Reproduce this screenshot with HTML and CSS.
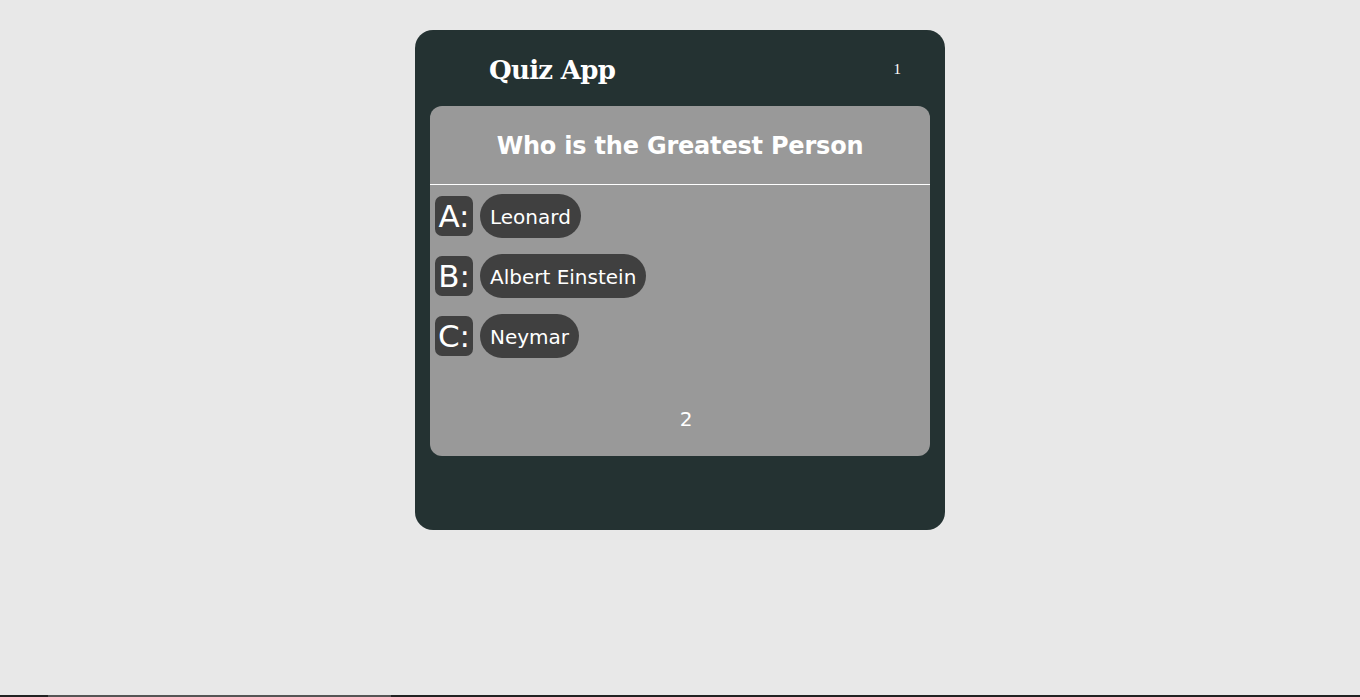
FILE: index.html
```html
<!DOCTYPE html>
<html>
<head>
<meta charset="utf-8">
<link rel="stylesheet" href="styles.css">
</head>
<body>
<div class="app">
  <header class="top">
    <h1 class="title">Quiz App</h1>
    <span class="count">1</span>
  </header>
  <section class="card">
    <h2 class="question">Who is the Greatest Person</h2>
    <div class="options">
      <div class="row"><span class="label">A:</span><button class="opt">Leonard</button></div>
      <div class="row"><span class="label">B:</span><button class="opt">Albert Einstein</button></div>
      <div class="row"><span class="label">C:</span><button class="opt">Neymar</button></div>
    </div>
    <div class="num">2</div>
  </section>
</div>
<div class="scrollbar"><div class="thumb"></div></div>
</body>
</html>
```

FILE: styles.css
```css
html, body {
  margin: 0;
  padding: 0;
  background: #e8e8e8;
  height: 100%;
}
body {
  padding-top: 30px;
  box-sizing: border-box;
  overflow: hidden;
}
.app {
  width: 530px;
  height: 500px;
  margin: 0 auto;
  background: #243232;
  border-radius: 18px;
  padding: 0 15px;
  box-sizing: border-box;
}
.top {
  height: 76px;
  display: flex;
  align-items: center;
  justify-content: space-between;
  padding: 0 29px 0 59px;
  color: #fff;
}
.title {
  margin: 0;
  font-family: "DejaVu Serif", "Liberation Serif", serif;
  font-weight: bold;
  font-size: 26px;
  letter-spacing: -0.7px;
  position: relative;
  top: 2px;
}
.count {
  font-family: "Liberation Serif", serif;
  font-size: 15px;
  position: relative;
  top: 1px;
}
.card {
  background: #999999;
  border-radius: 12px;
  height: 350px;
  color: #fff;
  display: flex;
  flex-direction: column;
}
.question {
  margin: 0;
  height: 79px;
  border-bottom: 1px solid #fff;
  display: flex;
  align-items: center;
  justify-content: center;
  font-family: "DejaVu Sans", Verdana, sans-serif;
  font-size: 24px;
  font-weight: bold;
  letter-spacing: -0.2px;
  box-sizing: border-box;
  padding-top: 2px;
}
.options {
  display: flex;
  flex-direction: column;
  gap: 16px;
  padding: 9px 5px 0;
}
.row {
  display: flex;
  align-items: center;
  gap: 7px;
  height: 44px;
}
.label {
  background: #404040;
  border-radius: 7px;
  height: 40px;
  min-width: 38px;
  display: flex;
  align-items: center;
  justify-content: center;
  font-family: "DejaVu Sans", Verdana, sans-serif;
  font-size: 31px;
  color: #fff;
  box-sizing: border-box;
  padding: 0 1px;
}
.opt {
  background: #404040;
  border: none;
  border-radius: 22px;
  height: 44px;
  padding: 2px 10px 0;
  color: #fff;
  font-family: "DejaVu Sans", Verdana, sans-serif;
  font-size: 20px;
}
.num {
  margin-top: 49px;
  text-align: center;
  padding-left: 12px;
  font-family: "DejaVu Sans", Verdana, sans-serif;
  font-size: 20px;
}
.scrollbar {
  position: fixed;
  left: 0;
  right: 0;
  bottom: 0;
  height: 2px;
  background: #222;
}
.thumb {
  margin-left: 48px;
  width: 343px;
  height: 2px;
  background: #555;
}
```
